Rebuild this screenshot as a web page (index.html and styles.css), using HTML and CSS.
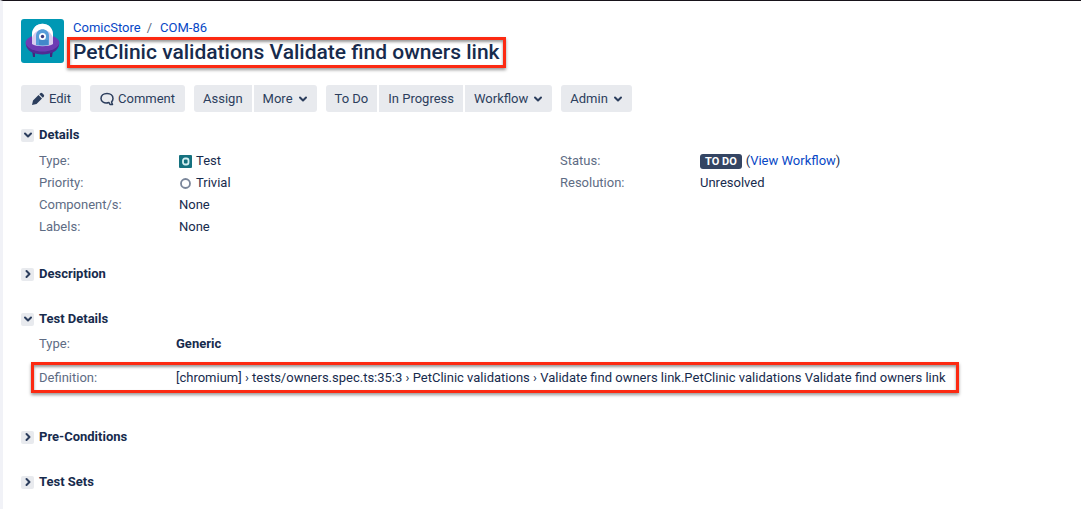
FILE: index.html
```html
<!DOCTYPE html>
<html lang="en">
<head>
  <meta charset="UTF-8">
  <title>[COM-86] PetClinic validations Validate find owners link</title>
  <meta name="viewport" content="width=device-width, initial-scale=1.0">
  <link rel="stylesheet" href="styles.css">
</head>
<body>
  <svg class="sprite" aria-hidden="true">
    <symbol id="chevron" viewBox="0 0 10 10"><path d="M2 3.5l3 3 3-3" /></symbol>
  </svg>

  <main class="issue">
    <header class="issue-header">
      <svg class="avatar" viewBox="0 0 43 44" aria-hidden="true">
        <rect width="43" height="44" rx="3" fill="#0098b4" />
        <path d="M11 31h3v7h-2zM29 31h3l-1 7h-2z" fill="#42257c" />
        <ellipse cx="21.500" cy="24" rx="17" ry="9" fill="#6d3cb4" />
        <path d="M5 25c4 10 29 10 33 0 0 14-33 14-33 0z" fill="#502b94" />
        <path d="M11 25V16C11 1 32 1 32 16v9c-4 3-17 3-21 0z" fill="#d9cdef" />
        <path d="M11 19V16C11 1 32 1 32 16v3c-3-11-18-11-21 0z" fill="#fff" />
        <path d="M15 26V17c0-9 13-9 13 0v9c-4 1-9 1-13 0z" fill="#579dd9" />
        <path d="M18 26v-5h9v5z" fill="#4388ca" />
        <circle cx="21.500" cy="17.500" r="3.500" fill="#fff" />
        <circle cx="21.500" cy="17.500" r="1.700" fill="#3a3b80" />
      </svg>
      <div class="issue-title">
        <nav class="breadcrumbs" aria-label="Breadcrumbs">
          <a href="#">ComicStore</a><span>/</span><a href="#">COM-86</a>
        </nav>
        <h1 class="marked">PetClinic validations Validate find owners link</h1>
      </div>
    </header>

    <div class="toolbar">
      <div class="btn-group">
        <button class="btn btn-icon">
          <svg class="icon-edit" viewBox="0 0 14 14" aria-hidden="true"><path d="M1 13l1-4.500 5.500-5.500 3.500 3.500L5.500 12zM8.300 2.200l1-1q1-.8 2 0l1.500 1.500q.8 1 0 2l-1 1z" /></svg>Edit
        </button>
      </div>
      <div class="btn-group">
        <button class="btn btn-icon">
          <svg class="icon-comment" viewBox="0 0 14 14" aria-hidden="true"><path d="M9 10.500C4 12 1 9.500 1 6.500 1 3.500 3.500 1.500 7 1.500s6 2 6 5c0 1.500-.5 2.500-1.500 3.500l1 2.500H10z" /></svg>Comment
        </button>
      </div>
      <div class="btn-group">
        <button class="btn">Assign</button>
        <button class="btn">More <svg class="caret"><use href="#chevron" /></svg></button>
      </div>
      <div class="btn-group">
        <button class="btn">To Do</button>
        <button class="btn">In Progress</button>
        <button class="btn">Workflow <svg class="caret"><use href="#chevron" /></svg></button>
      </div>
      <div class="btn-group">
        <button class="btn">Admin <svg class="caret"><use href="#chevron" /></svg></button>
      </div>
    </div>

    <section class="module">
      <h2><button class="toggle" aria-expanded="true"><span class="toggle-icon"><svg><use href="#chevron" /></svg></span>Details</button></h2>
      <div class="details">
        <dl class="fields">
          <dt>Type:</dt>
          <dd>
            <svg class="type-icon" viewBox="0 0 13 13" aria-hidden="true"><rect width="13" height="13" rx="1" fill="#15717f" /><rect x="4" y="3.500" width="5.500" height="6" rx="2" fill="none" stroke="#d5f0f2" stroke-width="1.800" /></svg>Test
          </dd>
          <dt>Priority:</dt>
          <dd>
            <svg class="type-icon" viewBox="0 0 13 13" aria-hidden="true"><circle cx="6.500" cy="6.500" r="4.500" fill="none" stroke="#7a869a" stroke-width="1.800" /></svg>Trivial
          </dd>
          <dt>Component/s:</dt>
          <dd>None</dd>
          <dt>Labels:</dt>
          <dd>None</dd>
        </dl>
        <dl class="fields">
          <dt>Status:</dt>
          <dd><span class="lozenge">To Do</span>(<a href="#">View Workflow</a>)</dd>
          <dt>Resolution:</dt>
          <dd>Unresolved</dd>
        </dl>
      </div>
    </section>

    <section class="module">
      <h2><button class="toggle" aria-expanded="false"><span class="toggle-icon"><svg><use href="#chevron" /></svg></span>Description</button></h2>
    </section>

    <section class="module">
      <h2><button class="toggle" aria-expanded="true"><span class="toggle-icon"><svg><use href="#chevron" /></svg></span>Test Details</button></h2>
      <dl class="test-details">
        <div class="test-row">
          <dt>Type:</dt>
          <dd><strong>Generic</strong></dd>
        </div>
        <div class="test-row marked">
          <dt>Definition:</dt>
          <dd>[chromium] › tests/owners.spec.ts:35:3 › PetClinic validations › Validate find owners link.PetClinic validations Validate find owners link</dd>
        </div>
      </dl>
    </section>

    <section class="module">
      <h2><button class="toggle" aria-expanded="false"><span class="toggle-icon"><svg><use href="#chevron" /></svg></span>Pre-Conditions</button></h2>
    </section>

    <section class="module">
      <h2><button class="toggle" aria-expanded="false"><span class="toggle-icon"><svg><use href="#chevron" /></svg></span>Test Sets</button></h2>
    </section>
  </main>
</body>
</html>
```
FILE: styles.css
```css
:root {
  --text: #172b4d;
  --subtle: #5e6c84;
  --link: #0747c6;
  --button: #e8eaee;
  --icon: #2c3e5d;
  --mark: #fc2a12;
}

* {
  box-sizing: border-box;
}

body {
  margin: 0;
  font-family: Roboto, "Liberation Sans", sans-serif;
  font-size: 13px;
  line-height: 20px;
  color: var(--text);
  background: #fff;
}

a {
  color: var(--link);
  text-decoration: none;
}

a:hover {
  text-decoration: underline;
}

h1,
h2,
dl,
dd {
  margin: 0;
}

.sprite {
  position: absolute;
  width: 0;
  height: 0;
}

.issue {
  min-height: 100vh;
  padding: 17px 0 16px 18px;
  border-top: 1px solid #17131a;
  border-left: 3px solid #f1f2f7;
}

.issue-header {
  display: flex;
  gap: 3px;
}

.avatar {
  width: 43px;
  height: 44px;
  margin-top: 1px;
}

.breadcrumbs {
  display: flex;
  gap: 6px;
  padding-left: 6px;
  height: 19px;
  color: var(--subtle);
}

.breadcrumbs span {
  margin-right: 2px;
}

.marked {
  border: 3px solid var(--mark);
  box-shadow: 0 2px 3px rgba(0, 0, 0, 0.4), inset 0 2px 3px rgba(0, 0, 0, 0.4);
}

h1 {
  padding: 0 3px;
  font-size: 21px;
  font-weight: 500;
  line-height: 25px;
}

.toolbar {
  display: flex;
  flex-wrap: wrap;
  gap: 9px;
  margin-top: 17px;
}

.btn-group {
  display: flex;
  gap: 2px;
}

.btn {
  display: flex;
  align-items: center;
  height: 27px;
  padding: 0 9px;
  border: none;
  background: var(--button);
  color: var(--icon);
  font: inherit;
  cursor: pointer;
}

.btn-icon {
  padding: 0 10px;
}

.btn:first-child {
  border-top-left-radius: 3px;
  border-bottom-left-radius: 3px;
}

.btn:last-child {
  border-top-right-radius: 3px;
  border-bottom-right-radius: 3px;
}

.btn:hover {
  background: #dcdfe5;
}

.icon-edit,
.icon-comment {
  width: 14px;
  height: 14px;
  margin-right: 4px;
  fill: var(--icon);
}

.icon-comment {
  fill: none;
  stroke: var(--icon);
  stroke-width: 1.5;
  stroke-linejoin: round;
}

.caret,
.toggle-icon svg {
  width: 10px;
  height: 10px;
  fill: none;
  stroke: var(--icon);
  stroke-width: 2;
  stroke-linecap: round;
  stroke-linejoin: round;
}

.caret {
  margin-left: 5px;
}

.module {
  margin-top: 25px;
}

.toolbar + .module {
  margin-top: 13px;
}

h2 {
  font-size: 13px;
  font-weight: 700;
  line-height: 20px;
}

.toggle {
  display: flex;
  align-items: center;
  gap: 5px;
  padding: 0;
  border: none;
  background: none;
  color: inherit;
  font: inherit;
  cursor: pointer;
}

.toggle-icon {
  display: flex;
  align-items: center;
  justify-content: center;
  width: 13px;
  height: 13px;
  border-radius: 2px;
  background: var(--button);
}

.toggle[aria-expanded="false"] svg {
  transform: rotate(-90deg);
}

.details {
  display: grid;
  grid-template-columns: 1fr 1fr;
  align-items: start;
  padding: 5px 0 1px 18px;
}

.fields {
  display: grid;
  grid-template-columns: 140px 1fr;
  grid-auto-rows: 22px;
  align-items: center;
}

dt {
  color: var(--subtle);
}

.fields dd {
  display: flex;
  align-items: center;
}

.type-icon {
  width: 13px;
  height: 13px;
  margin-right: 4px;
}

.lozenge {
  height: 15px;
  margin-right: 4px;
  padding: 0 5px;
  border-radius: 3px;
  background: #344563;
  color: #fff;
  font-size: 11px;
  font-weight: 700;
  line-height: 15px;
  text-transform: uppercase;
}

.test-details {
  padding: 5px 0 9px 10px;
}

.test-row {
  display: grid;
  grid-template-columns: 137px 1fr;
  width: fit-content;
  padding: 0 8px;
}

.test-row.marked {
  margin-top: 8px;
  padding: 3px 10px 2px 5px;
}

strong {
  font-weight: 700;
}
```
